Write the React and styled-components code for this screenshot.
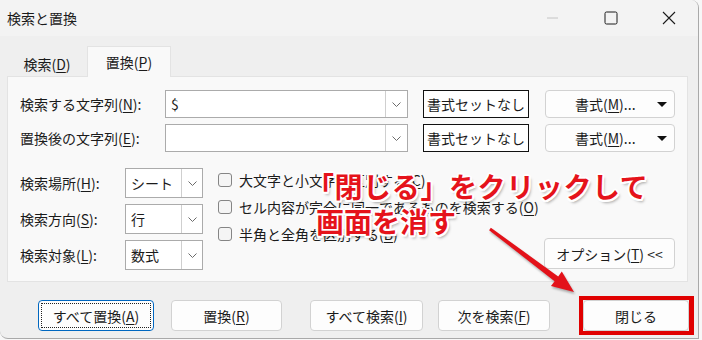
import React from 'react'
import styled, { createGlobalStyle } from 'styled-components'

const GlobalStyle = createGlobalStyle`
  html, body {
    margin: 0;
    padding: 0;
    background: #f7f7f7;
  }
  body {
    font-family: "Noto Sans CJK JP", "Noto Sans", sans-serif;
    color: #1b1b1b;
  }
  u {
    text-decoration-thickness: 1px;
    text-underline-offset: 2px;
  }
`;

const Stage = styled.div`
  position: relative;
  width: 702px;
  height: 340px;
  overflow: hidden;
`;

const Window = styled.div`
  width: 698px;
  height: 338px;
  background: #efefef;
  border-right: 1px solid #a9a9a9;
  border-bottom: 1px solid #a9a9a9;
  border-radius: 0 8px 0 8px;
  display: flex;
  flex-direction: column;
  overflow: hidden;
`;

const TitleBar = styled.div`
  height: 36px;
  flex: none;
  display: flex;
  align-items: center;
  background: #f3f3f3;
  padding-left: 7px;
`;

const Title = styled.div`
  flex: 1;
  font-size: 14px;
  line-height: 20px;
`;

const Control = styled.div`
  width: 58px;
  height: 36px;
  display: flex;
  align-items: center;
  justify-content: center;
`;

const Body = styled.div`
  flex: 1;
  display: flex;
  flex-direction: column;
  padding: 10px 0 0 7px;
`;

const Tabs = styled.div`
  display: flex;
  align-items: flex-end;
  height: 31px;
  margin-bottom: -1px;
  position: relative;
  z-index: 1;
`;

const Tab = styled.div`
  height: ${(p) => (p.$active ? '31px' : '27px')};
  box-sizing: border-box;
  display: flex;
  align-items: center;
  justify-content: center;
  font-size: 14px;
  background: ${(p) => (p.$active ? '#f9f9f9' : 'transparent')};
  border: 1px solid ${(p) => (p.$active ? '#e3e3e3' : 'transparent')};
  border-bottom: none;
  width: ${(p) => p.$w}px;
`;

const Panel = styled.div`
  width: 681px;
  height: 206px;
  box-sizing: border-box;
  background: #f9f9f9;
  border: 1px solid #e3e3e3;
  padding: 13px 12px 0 12px;
  display: flex;
  flex-direction: column;
`;

const FieldRow = styled.div`
  display: flex;
  align-items: center;
  height: 28px;
  margin-top: ${(p) => p.$mt || 0}px;
`;

const Label = styled.div`
  width: ${(p) => p.$w}px;
  flex: none;
  font-size: 14px;
  line-height: 20px;
  white-space: nowrap;
`;

const Combo = styled.div`
  width: ${(p) => p.$w}px;
  height: ${(p) => p.$h}px;
  box-sizing: border-box;
  background: #fff;
  border: 1px solid #ababab;
  display: flex;
  flex: none;
`;

const ComboText = styled.div`
  flex: 1;
  padding-left: 5px;
  font-size: 14px;
  display: flex;
  align-items: center;
`;

const DropPart = styled.div`
  width: ${(p) => p.$w}px;
  border-left: 1px solid #cfcfcf;
  display: flex;
  align-items: center;
  justify-content: center;
`;

const PlainButton = styled.div`
  width: 106px;
  height: 28px;
  box-sizing: border-box;
  margin-left: 15px;
  flex: none;
  border: 1px solid #111;
  background: #fff;
  display: flex;
  align-items: center;
  justify-content: center;
  font-size: 14px;
`;

const MenuButton = styled.div`
  width: 130px;
  height: 28px;
  box-sizing: border-box;
  margin-left: 16px;
  flex: none;
  border: 1px solid #d2d2d2;
  border-radius: 4px;
  background: #fdfdfd;
  display: flex;
  align-items: center;
  font-size: 14px;
  padding: 0 7px 0 29px;
  justify-content: space-between;
`;

const Triangle = styled.span`
  width: 0;
  height: 0;
  border-left: 5px solid transparent;
  border-right: 5px solid transparent;
  border-top: 5px solid #111;
`;

const OptionsArea = styled.div`
  display: flex;
  margin-top: 16px;
`;

const SelectGrid = styled.div`
  display: grid;
  grid-template-columns: 105px 78px;
  grid-auto-rows: 30px;
  row-gap: 6px;
  align-items: center;
`;

const CheckCol = styled.div`
  display: flex;
  flex-direction: column;
  gap: 13px;
  margin-left: 15px;
  padding-top: 5px;
`;

const CheckRow = styled.div`
  display: flex;
  align-items: center;
  height: 14px;
  font-size: 14px;
  white-space: nowrap;
`;

const Box = styled.span`
  width: 14px;
  height: 14px;
  box-sizing: border-box;
  border: 1px solid #858585;
  border-radius: 3px;
  background: #f5f5f5;
  margin-right: 7px;
  flex: none;
`;

const OptionsButton = styled.div`
  margin-left: auto;
  align-self: flex-end;
  margin-bottom: 1px;
  width: 131px;
  height: 31px;
  box-sizing: border-box;
  border: 1px solid #d2d2d2;
  border-radius: 4px;
  background: #fdfdfd;
  display: flex;
  align-items: center;
  justify-content: center;
  font-size: 14px;
`;

const ButtonRow = styled.div`
  display: flex;
  align-items: center;
  margin-top: 14px;
  padding-left: 31px;
`;

const ActionButton = styled.div`
  width: ${(p) => p.$w}px;
  height: 31px;
  box-sizing: border-box;
  flex: none;
  margin-left: ${(p) => p.$ml || 0}px;
  border: 1px solid ${(p) => (p.$focus ? '#0067c0' : '#d2d2d2')};
  border-radius: 4px;
  background: #fdfdfd;
  display: flex;
  align-items: center;
  justify-content: center;
  font-size: 14px;
  position: relative;

  &::after {
    content: '';
    display: ${(p) => (p.$focus ? 'block' : 'none')};
    position: absolute;
    inset: 2px;
    border: 1px dotted #222;
  }
`;

const Highlight = styled.div`
  margin-left: 29px;
  flex: none;
  border: 4px solid #e00000;
  border-right-width: 5px;
  display: flex;
`;

const Annotation = styled.div`
  position: absolute;
  left: 316px;
  top: 169px;
  font-size: 28px;
  font-weight: 700;
  line-height: 35px;
  color: #e5131b;
  white-space: nowrap;
  text-shadow:
    2px 0 #fff, -2px 0 #fff, 0 2px #fff, 0 -2px #fff,
    1.5px 1.5px #fff, -1.5px 1.5px #fff, 1.5px -1.5px #fff, -1.5px -1.5px #fff,
    2px 3px 3px rgba(0, 0, 0, 0.35);
`;

const AnnotationLine = styled.div`
  margin-left: ${(p) => p.$ml || 0}px;
  letter-spacing: ${(p) => p.$ls || 0}px;
`;

const ArrowLayer = styled.svg`
  position: absolute;
  left: 0;
  top: 0;
  pointer-events: none;
  filter: drop-shadow(1px 2px 1px rgba(0, 0, 0, 0.3));
`;

const Chevron = () => (
  <svg width="9" height="5" viewBox="0 0 9 5">
    <polyline points="0.5,0.5 4.5,4.5 8.5,0.5" fill="none" stroke="#6b6b6b" strokeWidth="1" />
  </svg>
);

const Minimize = () => (
  <svg width="12" height="2" viewBox="0 0 12 2">
    <line x1="0" y1="1" x2="11" y2="1" stroke="#c4c4c4" strokeWidth="1" />
  </svg>
);

const Maximize = () => (
  <svg width="14" height="14" viewBox="0 0 14 14">
    <rect x="1" y="1" width="12" height="12" rx="1.5" fill="none" stroke="#1b1b1b" strokeWidth="1" />
  </svg>
);

const Close = () => (
  <svg width="14" height="14" viewBox="0 0 14 14">
    <path d="M1 1 L13 13 M13 1 L1 13" stroke="#1b1b1b" strokeWidth="1.1" />
  </svg>
);

const Select = ({ value }) => (
  <Combo $w={78} $h={30}>
    <ComboText>{value}</ComboText>
    <DropPart $w={20}><Chevron /></DropPart>
  </Combo>
);

const Check = ({ children }) => (
  <CheckRow>
    <Box />
    {children}
  </CheckRow>
);

export default function App() {
  return (
    <Stage>
      <GlobalStyle />
      <Window>
        <TitleBar>
          <Title>検索と置換</Title>
          <Control><Minimize /></Control>
          <Control><Maximize /></Control>
          <Control><Close /></Control>
        </TitleBar>
        <Body>
          <Tabs>
            <Tab $w={80}>検索(<u>D</u>)</Tab>
            <Tab $w={84} $active>置換(<u>P</u>)</Tab>
          </Tabs>
          <Panel>
            <FieldRow>
              <Label $w={145}>検索する文字列(<u>N</u>):</Label>
              <Combo $w={243} $h={28}>
                <ComboText>$</ComboText>
                <DropPart $w={21}><Chevron /></DropPart>
              </Combo>
              <PlainButton>書式セットなし</PlainButton>
              <MenuButton>
                <span>書式(<u>M</u>)...</span>
                <Triangle />
              </MenuButton>
            </FieldRow>
            <FieldRow $mt={6}>
              <Label $w={145}>置換後の文字列(<u>E</u>):</Label>
              <Combo $w={243} $h={28}>
                <ComboText />
                <DropPart $w={21}><Chevron /></DropPart>
              </Combo>
              <PlainButton>書式セットなし</PlainButton>
              <MenuButton>
                <span>書式(<u>M</u>)...</span>
                <Triangle />
              </MenuButton>
            </FieldRow>
            <OptionsArea>
              <SelectGrid>
                <Label $w={105}>検索場所(<u>H</u>):</Label>
                <Select value="シート" />
                <Label $w={105}>検索方向(<u>S</u>):</Label>
                <Select value="行" />
                <Label $w={105}>検索対象(<u>L</u>):</Label>
                <Select value="数式" />
              </SelectGrid>
              <CheckCol>
                <Check>大文字と小文字を区別する(<u>C</u>)</Check>
                <Check>セル内容が完全に同一であるものを検索する(<u>O</u>)</Check>
                <Check>半角と全角を区別する(<u>B</u>)</Check>
              </CheckCol>
              <OptionsButton>オプション(<u>T</u>) &lt;&lt;</OptionsButton>
            </OptionsArea>
          </Panel>
          <ButtonRow>
            <ActionButton $w={116} $focus>すべて置換(<u>A</u>)</ActionButton>
            <ActionButton $w={111} $ml={17}>置換(<u>R</u>)</ActionButton>
            <ActionButton $w={113} $ml={28}>すべて検索(<u>I</u>)</ActionButton>
            <ActionButton $w={112} $ml={15}>次を検索(<u>F</u>)</ActionButton>
            <Highlight>
              <ActionButton $w={106}>閉じる</ActionButton>
            </Highlight>
          </ButtonRow>
        </Body>
      </Window>
      <Annotation>
        <AnnotationLine $ml={-10} $ls={0.6}>「閉じる」をクリックして</AnnotationLine>
        <AnnotationLine>画面を消す</AnnotationLine>
      </Annotation>
      <ArrowLayer width="702" height="340" viewBox="0 0 702 340">
        <polygon
          points="490.9,227.8 558.2,276.4 561.8,271.6 574,292 551,286 554.6,281.2 489.1,230.2"
          fill="#e3121a"
        />
      </ArrowLayer>
    </Stage>
  )
}
